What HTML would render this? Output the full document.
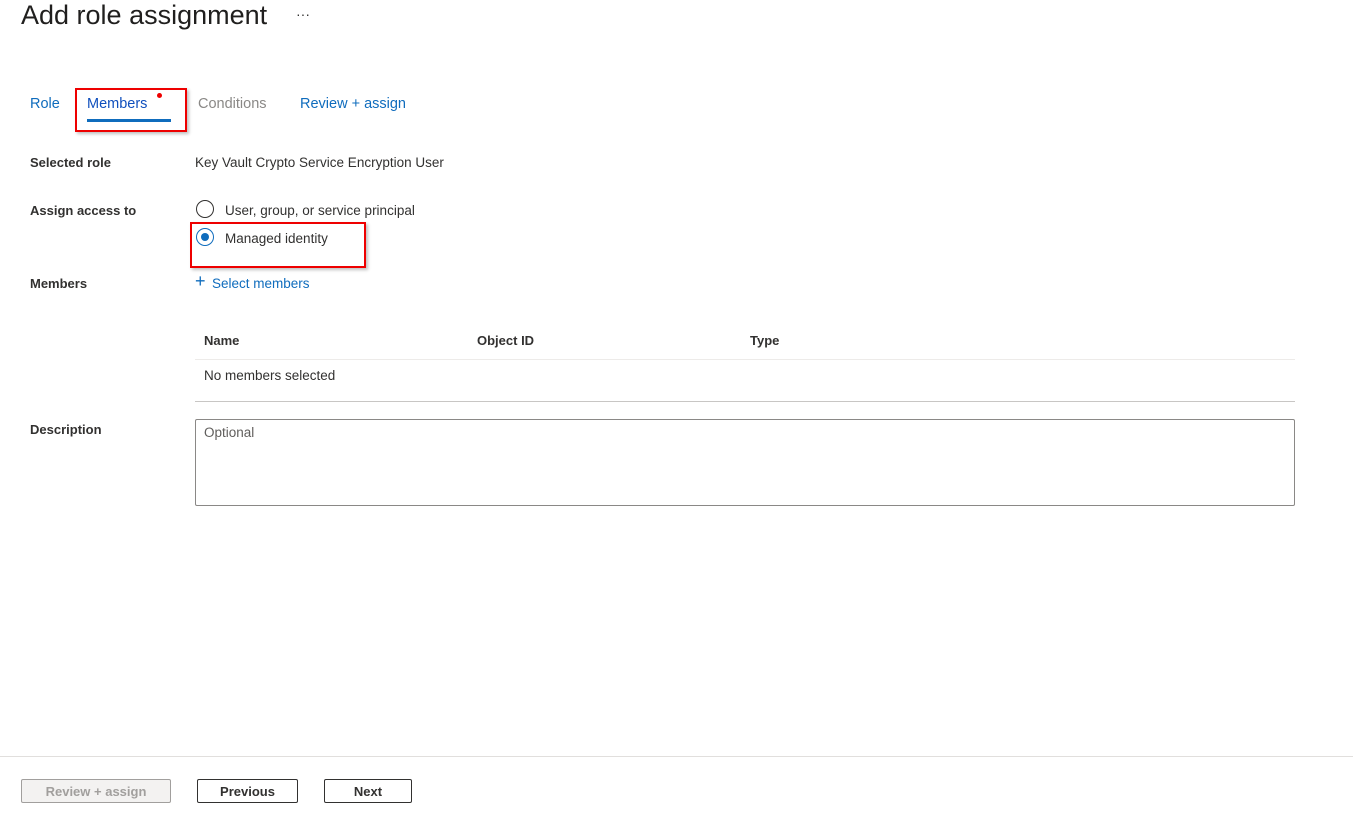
<!DOCTYPE html>
<html><head><style>
body{margin:0;width:1353px;height:816px;background:#fff;font-family:"Liberation Sans",sans-serif;color:#323130;position:relative;overflow:hidden}
.a{position:absolute;white-space:nowrap}
.t{font-size:14.5px}
.b{font-weight:bold;font-size:13px}
.blue{color:#0f6cbd}
.red{position:absolute;border:2px solid #e00;box-shadow:2px 2px 3px rgba(0,0,0,.25)}
.btn{position:absolute;height:24px;top:779px;border:1px solid #323130;border-radius:2px;font-size:13px;font-weight:bold;text-align:center;line-height:24px;box-sizing:border-box}
</style></head><body>
<div class="a" style="left:21px;top:0px;font-size:27px;color:#201f1e">Add role assignment</div>
<div class="a" style="left:296px;top:6px;font-size:14px">···</div>
<div class="a t blue" style="left:30px;top:96px">Role</div>
<div class="a t" style="left:87px;top:96px;color:#0f4fbd">Members</div>
<div style="position:absolute;left:157px;top:93px;width:5px;height:5px;border-radius:50%;background:#e00"></div>
<div style="position:absolute;left:87px;top:119px;width:84px;height:3px;background:#0f6cbd"></div>
<div class="red" style="left:75px;top:88px;width:108px;height:40px"></div>
<div class="a t" style="left:198px;top:96px;color:#8a8886">Conditions</div>
<div class="a t blue" style="left:300px;top:96px">Review + assign</div>
<div class="a b" style="left:30px;top:155px">Selected role</div>
<div class="a" style="left:195px;top:155px;font-size:13.5px">Key Vault Crypto Service Encryption User</div>
<div class="a b" style="left:30px;top:203px">Assign access to</div>
<div style="position:absolute;left:196px;top:200px;width:16px;height:16px;border:1px solid #323130;border-radius:50%"></div>
<div class="a" style="left:225px;top:203px;font-size:13.5px">User, group, or service principal</div>
<div style="position:absolute;left:196px;top:228px;width:16px;height:16px;border:1px solid #0f6cbd;border-radius:50%"></div>
<div style="position:absolute;left:201px;top:233px;width:8px;height:8px;background:#0f6cbd;border-radius:50%"></div>
<div class="a" style="left:225px;top:231px;font-size:13.5px">Managed identity</div>
<div class="red" style="left:190px;top:222px;width:172px;height:42px"></div>
<div class="a b" style="left:30px;top:276px">Members</div>
<div class="a blue" style="left:195px;top:271px;font-size:18px;font-weight:300">+</div>
<div class="a blue" style="left:212px;top:276px;font-size:13.5px">Select members</div>
<div class="a b" style="left:204px;top:333px">Name</div>
<div class="a b" style="left:477px;top:333px">Object ID</div>
<div class="a b" style="left:750px;top:333px">Type</div>
<div style="position:absolute;left:195px;top:359px;width:1100px;height:1px;background:#edebe9"></div>
<div class="a" style="left:204px;top:368px;font-size:13.5px">No members selected</div>
<div style="position:absolute;left:195px;top:401px;width:1100px;height:1px;background:#c8c6c4"></div>
<div class="a b" style="left:30px;top:422px">Description</div>
<div style="position:absolute;left:195px;top:419px;width:1100px;height:87px;border:1px solid #8a8886;box-sizing:border-box;border-radius:2px"></div>
<div class="a" style="left:204px;top:425px;font-size:13.5px;color:#605e5c">Optional</div>
<div style="position:absolute;left:0;top:756px;width:1353px;height:1px;background:#e1dfdd"></div>
<div class="btn" style="left:21px;width:150px;background:#f3f2f1;border-color:#a19f9d;color:#a19f9d">Review + assign</div>
<div class="btn" style="left:197px;width:101px">Previous</div>
<div class="btn" style="left:324px;width:88px">Next</div>
</body></html>
